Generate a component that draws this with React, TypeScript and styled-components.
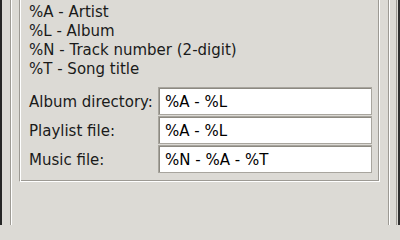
import styled, { createGlobalStyle } from 'styled-components';

const GlobalStyle = createGlobalStyle`
    html, body {
        margin: 0;
        padding: 0;
        background: #dcdad5;
    }
    * {
        box-sizing: border-box;
    }
`;

const FIELDS = [
    { label: 'Album directory:', value: '%A - %L' },
    { label: 'Playlist file:', value: '%A - %L' },
    { label: 'Music file:', value: '%N - %A - %T' },
];

const HINTS = [
    '%A - Artist',
    '%L - Album',
    '%N - Track number (2-digit)',
    '%T - Song title',
];

const App = () => {
    return (
        <Window>
            <GlobalStyle />
            <LeftGutter />
            <Panel>
                <Group>
                    <HintList>
                        {HINTS.map((hint) => (
                            <Hint key={hint}>{hint}</Hint>
                        ))}
                    </HintList>
                    <FieldGrid>
                        {FIELDS.map((field) => (
                            <FieldRow key={field.label}>
                                <FieldLabel>{field.label}</FieldLabel>
                                <Entry>{field.value}</Entry>
                            </FieldRow>
                        ))}
                    </FieldGrid>
                </Group>
            </Panel>
            <RightGutter />
        </Window>
    );
};

const Window = styled.div`
    width: 400px;
    height: 225px;
    display: flex;
    background: #dcdad5;
    border-left: 2px solid #262626;
    border-right: 2px solid #2e2e2e;
    font-family: 'DejaVu Sans', 'Liberation Sans', sans-serif;
    font-size: 15px;
    overflow: hidden;
`;

const LeftGutter = styled.div`
    width: 8px;
    flex-shrink: 0;
`;

const RightGutter = styled.div`
    width: 8px;
    flex-shrink: 0;
    box-shadow: inset -1px 0 0 #dcdad5, inset -2px 0 0 #9d9a94;
`;

const Panel = styled.div`
    width: 380px;
    flex-shrink: 0;
    border-left: 1px solid #9d9a94;
    border-right: 1px solid #ffffff;
    box-shadow: inset 1px 0 0 #ffffff, inset -1px 0 0 #9d9a94;
    padding: 0 9px 0 8px;
`;

const Group = styled.section`
    height: 182px;
    border-left: 1px solid #9d9a94;
    border-right: 1px solid #ffffff;
    border-bottom: 1px solid #ffffff;
    box-shadow: inset 1px 0 0 #ffffff, inset -1px 0 0 #9d9a94,
        inset 0 -1px 0 #9d9a94;
    padding: 3px 7px 0 9px;
    display: flex;
    flex-direction: column;
`;

const HintList = styled.div`
    display: flex;
    flex-direction: column;
    margin-bottom: 8px;
`;

const Hint = styled.div`
    line-height: 19px;
    color: #1a1a1a;
    white-space: nowrap;
`;

const FieldGrid = styled.div`
    display: flex;
    flex-direction: column;
    gap: 1px;
`;

const FieldRow = styled.div`
    display: grid;
    grid-template-columns: 129px 1fr;
    height: 28px;
`;

const FieldLabel = styled.label`
    padding-top: 6px;
    line-height: 19px;
    color: #1a1a1a;
    white-space: nowrap;
`;

const Entry = styled.div`
    height: 28px;
    background: #ffffff;
    border: 1px solid #a8a59e;
    box-shadow: inset 1px 1px 0 #8c8981;
    padding: 5px 0 0 6px;
    line-height: 19px;
    color: #000000;
    white-space: nowrap;
`;

export default App;
